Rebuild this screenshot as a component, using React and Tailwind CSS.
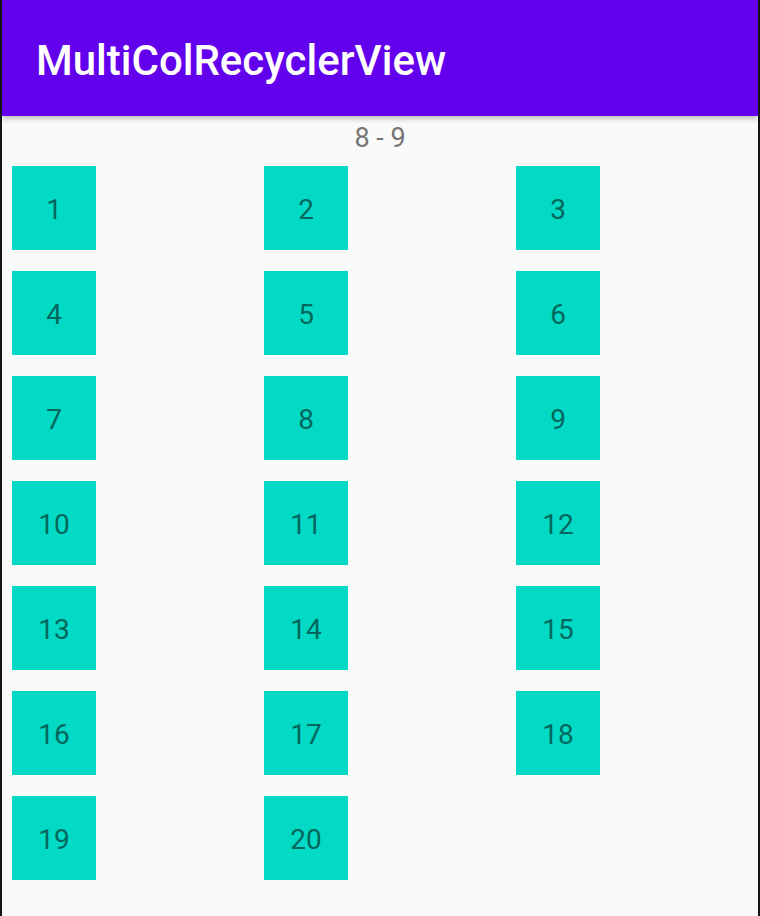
import React from "react";

const items = Array.from({ length: 20 }, (_, i) => i + 1);

const App = () => {
  return (
    <div
      className="h-[916px] w-[760px] border-x-2 border-[#141414] bg-[#fafafa] overflow-hidden"
      style={{ fontFamily: "Roboto, 'Liberation Sans', sans-serif" }}
    >
      <header className="relative z-10 flex h-[116px] items-center bg-[#6200ee] pl-[34px] shadow-[0_3px_5px_rgba(0,0,0,0.22)]">
        <h1 className="pt-[5px] text-[42px] font-medium text-white">MultiColRecyclerView</h1>
      </header>
      <div className="flex h-[40px] items-center justify-center pt-[4px] text-[27px] text-[#757575]">
        8 - 9
      </div>
      <div className="grid grid-cols-3">
        {items.map((n) => (
          <div key={n} className="p-[10px] pb-[11px]">
            <div className="flex h-[84px] w-[84px] items-center justify-center bg-[#03dac5] pt-[3px] text-[28px] text-[#02675d]">
              {n}
            </div>
          </div>
        ))}
      </div>
    </div>
  );
};

export default App;
